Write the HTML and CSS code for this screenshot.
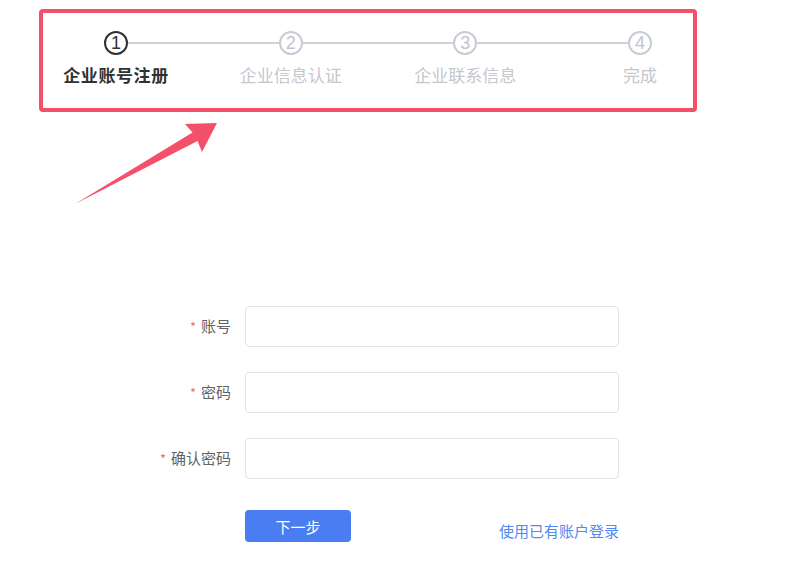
FILE: index.html
```html
<!DOCTYPE html>
<html lang="zh-CN">
<head>
<meta charset="utf-8">
<title>企业账号注册</title>
<link rel="stylesheet" href="styles.css">
</head>
<body>
<div class="page">
  <div class="steps-box">
    <div class="track">
      <span class="dot active">1</span><span class="line"></span>
      <span class="dot">2</span><span class="line"></span>
      <span class="dot">3</span><span class="line"></span>
      <span class="dot">4</span>
    </div>
    <div class="labels">
      <span class="label active">企业账号注册</span>
      <span class="label">企业信息认证</span>
      <span class="label">企业联系信息</span>
      <span class="label">完成</span>
    </div>
  </div>

  <svg class="arrow" width="800" height="582" viewBox="0 0 800 582">
    <polygon points="75,204 192.5,132.5 185,124 217,123 202,152 197.5,141" fill="#f4506a"/>
  </svg>

  <form class="form">
    <label class="form-label"><span class="req">*</span>账号</label>
    <input class="input" type="text">
    <label class="form-label"><span class="req">*</span>密码</label>
    <input class="input" type="password">
    <label class="form-label"><span class="req">*</span>确认密码</label>
    <input class="input" type="password">
    <div class="actions">
      <button class="btn" type="button">下一步</button>
      <a class="link" href="#">使用已有账户登录</a>
    </div>
  </form>
</div>
</body>
</html>
```

FILE: styles.css
```css
* { box-sizing: border-box; }
html, body {
  margin: 0;
  padding: 0;
  background: #ffffff;
  font-family: "Noto Sans CJK SC", "Noto Sans", sans-serif;
}
.page {
  position: relative;
  width: 800px;
  height: 582px;
  padding-top: 9px;
  overflow: hidden;
}
.steps-box {
  margin-left: 39px;
  width: 658px;
  height: 103px;
  border: 4px solid #f4506a;
  border-radius: 4px;
  padding-top: 18px;
}
.track {
  display: flex;
  align-items: center;
  margin-left: 61px;
  width: 548px;
}
.dot {
  width: 24px;
  height: 24px;
  flex: none;
  border-radius: 50%;
  border: 2px solid #c9ccd2;
  color: #c0c4cc;
  font-family: "Liberation Sans", Arial, sans-serif;
  font-size: 18px;
  line-height: 20px;
  text-align: center;
}
.dot.active {
  border-color: #303133;
  color: #303133;
}
.line {
  flex: 1;
  height: 2px;
  background: #cfd2d8;
}
.labels {
  display: grid;
  grid-template-columns: repeat(4, 174.67px);
  margin-left: -14.33px;
  margin-top: 8px;
}
.label {
  text-align: center;
  font-size: 17px;
  line-height: 24px;
  color: #c4c7cd;
}
.label.active {
  color: #303133;
  font-weight: 700;
  letter-spacing: 0.6px;
}
.arrow {
  position: absolute;
  left: 0;
  top: 0;
  pointer-events: none;
}
.form {
  display: grid;
  grid-template-columns: 100px 374px;
  column-gap: 14px;
  row-gap: 25px;
  margin-left: 131px;
  margin-top: 194px;
  align-items: center;
}
.form-label {
  text-align: right;
  font-size: 15px;
  color: #606266;
  line-height: 20px;
}
.req {
  color: #f56c6c;
  margin-right: 5px;
  font-size: 13px;
}
.input {
  width: 374px;
  height: 41px;
  border: 1px solid #e1e4ea;
  border-radius: 4px;
  background: #fff;
  outline: none;
  margin: 0;
}
.actions {
  grid-column: 2;
  display: flex;
  justify-content: space-between;
  align-items: flex-end;
  margin-top: 6px;
}
.btn {
  width: 106px;
  height: 32px;
  border: none;
  border-radius: 4px;
  background: #4a7cf2;
  color: #fff;
  font-family: "Noto Sans CJK SC", sans-serif;
  font-size: 15px;
  padding: 0;
}
.link {
  color: #5089ef;
  font-size: 15px;
  line-height: 20px;
  text-decoration: none;
  margin-bottom: 1px;
}
```
